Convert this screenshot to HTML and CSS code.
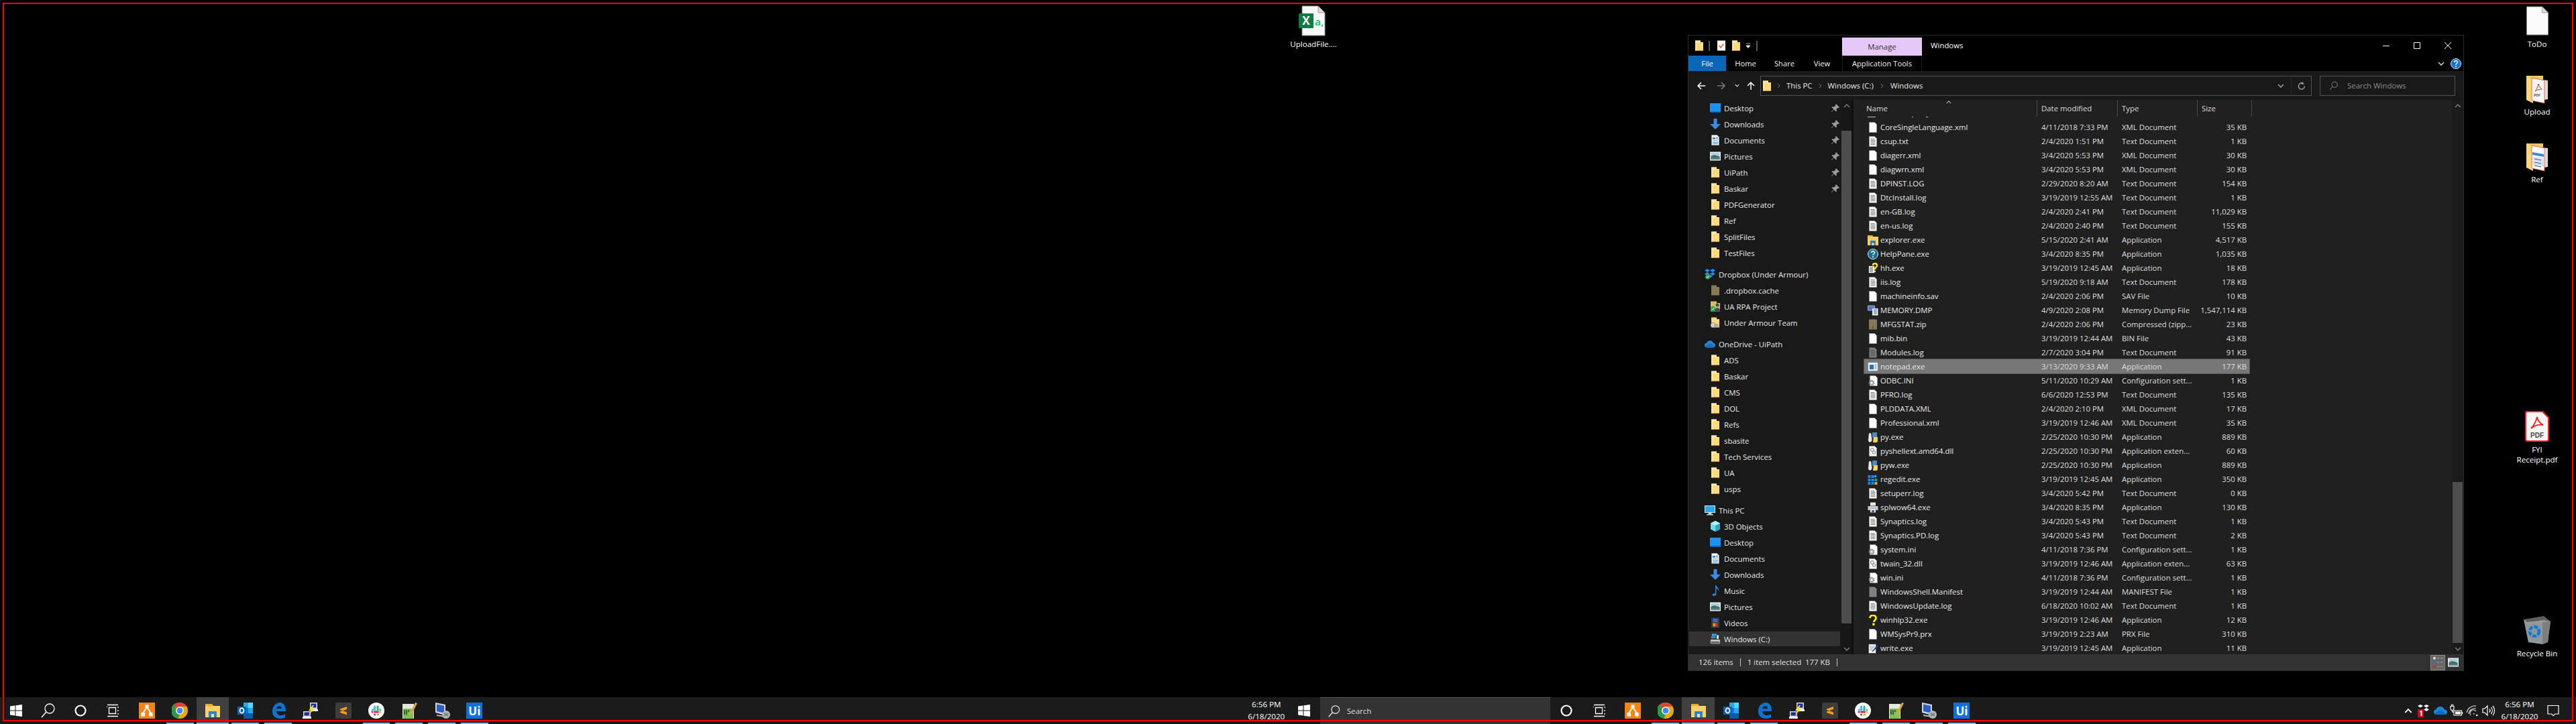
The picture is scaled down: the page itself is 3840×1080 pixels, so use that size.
FILE: index.html
```html
<!DOCTYPE html>
<html lang="en">
<head>
<meta charset="utf-8">
<title>Windows desktop</title>
<link rel="stylesheet" href="styles.css">
</head>
<body>
<svg class="defs" aria-hidden="true">
  <symbol id="folder" viewBox="0 0 16 16"><path d="M2 .5h8v2.500h4v12.500H2z" fill="#fcd97a"/><path d="M2 .5h8v2.500h4v1H4v11.500H2z" fill="#fde7a6"/><path d="M2 15h12v.5H2z" fill="#d9b04e"/></symbol>
  <symbol id="hidden" viewBox="0 0 16 16"><path d="M2 .5h8v2.500h4v12.500H2z" fill="#857a52"/></symbol>
  <symbol id="doc" viewBox="0 0 16 16"><path d="M2.500.5h8l3 3v12h-11z" fill="#fdfdfd" stroke="#9a9a9a" stroke-width=".5"/></symbol>
  <symbol id="txt" viewBox="0 0 16 16"><path d="M2.500.5h8l3 3v12h-11z" fill="#fdfdfd" stroke="#9a9a9a" stroke-width=".5"/><path d="M4.500 4.500h6M4.500 6.500h7M4.500 8.500h7M4.500 10.500h7M4.500 12.500h7" stroke="#666" stroke-width=".9"/></symbol>
  <symbol id="gtxt" viewBox="0 0 16 16"><path d="M2.500.5h8l3 3v12h-11z" fill="#7e7e7e"/><path d="M4.500 4.500h6M4.500 6.500h7M4.500 8.500h7M4.500 10.500h7M4.500 12.500h7" stroke="#4c4c4c" stroke-width=".9"/></symbol>
  <symbol id="gdoc" viewBox="0 0 16 16"><path d="M2.500.5h8l3 3v12h-11z" fill="#808080"/></symbol>
  <symbol id="ini" viewBox="0 0 16 16"><path d="M3.500.5h8l3 3v12h-11z" fill="#fdfdfd" stroke="#9a9a9a" stroke-width=".5"/><circle cx="6" cy="11" r="3.400" fill="none" stroke="#8a8a8a" stroke-width="2" stroke-dasharray="1.600 .7"/><circle cx="6" cy="11" r="2.200" fill="none" stroke="#a8a8a8" stroke-width="1.400"/></symbol>
  <symbol id="dll" viewBox="0 0 16 16"><path d="M2.500.5h8l3 3v12h-11z" fill="#fdfdfd" stroke="#9a9a9a" stroke-width=".5"/><circle cx="7" cy="6" r="2.400" fill="none" stroke="#8b9bb0" stroke-width="1.300"/><circle cx="9.500" cy="10" r="2.100" fill="none" stroke="#9a9a9a" stroke-width="1.300"/></symbol>
  <symbol id="explorer" viewBox="0 0 16 16"><path d="M0 1h7l1 2h8v13H0z" fill="#fbcf5e"/><path d="M0 1h7l1 2H0z" fill="#e9a92d"/><path d="M4 9h8v7H4z" fill="#2d7cc8"/><path d="M6.500 12.500h3V16h-3z" fill="#fbdf90"/></symbol>
  <symbol id="help" viewBox="0 0 16 16"><circle cx="8" cy="8" r="7.500" fill="#14708f" stroke="#d7eef5" stroke-width="1"/><path d="M5.700 6c0-3 4.800-3 4.800-.2 0 2-2.500 1.900-2.500 4" fill="none" stroke="#fff" stroke-width="1.500"/><path d="M7.200 11h1.600v1.700H7.200z" fill="#fff"/></symbol>
  <symbol id="hh" viewBox="0 0 16 16"><path d="M1.500 4.500h9v11h-9z" fill="#fff" stroke="#222" stroke-width=".8"/><path d="M3 7h5M3 9h5M3 11h5M3 13h5" stroke="#555"/><path d="M8 4c0-4 6-4 6 0 0 3-3 2.500-3 6" fill="none" stroke="#f6e31a" stroke-width="2.400"/><path d="M10 11.500h2v2.500h-2z" fill="#f6e31a"/></symbol>
  <symbol id="dmp" viewBox="0 0 16 16"><path d="M.5 1h10v7H.5z" fill="#4a7cd0" stroke="#c7d5ea" stroke-width=".7"/><path d="M7 5h8.500v10.500H7z" fill="#fff" stroke="#777" stroke-width=".5"/><path d="M9 7h5M9 9h5M9 11h5M9 13h5" stroke="#2a64c4"/></symbol>
  <symbol id="zip" viewBox="0 0 16 16"><path d="M2 .5h12v15H2z" fill="#857a52"/><path d="M7 .5h2v15H7z" fill="#5f5f55"/><path d="M7.500 1h1M7.500 3h1M7.500 5h1M7.500 7h1M7.500 9h1" stroke="#ccc"/></symbol>
  <symbol id="npad" viewBox="0 0 16 16"><path d="M1 2h14v12H1z" fill="#f4f7fb" stroke="#bcc8d6" stroke-width=".5"/><path d="M3 5h6v7H3z" fill="#1a74d8"/><path d="M10.500 5h3M10.500 7h3M10.500 9h3M10.500 11h3" stroke="#7b8896"/></symbol>
  <symbol id="py" viewBox="0 0 16 16"><path d="M7 1h7v8H7z" fill="#4b87c4"/><path d="M9 8h6v6c0 1-1 2-2 2H8z" fill="#f5d24f"/><path d="M2 3c1-2 3-1.500 3.500 1l1 8c0 2-1 3.500-3 3.500S1 14 1 12z" fill="#e8edf2" stroke="#7b7b7b" stroke-width=".5"/></symbol>
  <symbol id="reg" viewBox="0 0 16 16"><path d="M.5 2h4v4h-4zM5.500 2h4v4h-4zM.5 7h4v4h-4zM5.500 7h4v4h-4zM10.500 7h4v4h-4zM.5 12h4v4h-4zM5.500 12h4v4h-4z" fill="#0f8fd4"/><path d="M11.500 1l1 1.500 1.500 1-1.500 1-1 1.500-1-1.500-1.500-1 1.500-1z" fill="#1fb7ee"/><path d="M10.500 12h4v4h-4z" fill="#e8a51d"/></symbol>
  <symbol id="print" viewBox="0 0 16 16"><path d="M4 .5h8v5H4z" fill="#e8e8e8"/><path d="M.5 6h15v6H.5z" fill="#c9c9c9"/><path d="M4 10h8v5.500H4z" fill="#fff" stroke="#666" stroke-width=".5"/><path d="M6 12h4v3H6z" fill="#2a64c4"/></symbol>
  <symbol id="whlp" viewBox="0 0 16 16"><path d="M3.500 5c0-5.500 9-5.500 9 0 0 3.600-3.200 3.200-3.200 6" fill="none" stroke="#f8ec10" stroke-width="2.800"/><path d="M7.300 12.500h3.200V16H7.300z" fill="#f8ec10"/></symbol>
  <symbol id="write" viewBox="0 0 16 16"><path d="M1.500 1.500h11v14h-11z" fill="#fff" stroke="#333" stroke-width=".6"/><path d="M2 1v1.500M4 1v1.500M6 1v1.500M8 1v1.500M10 1v1.500M12 1v1.500" stroke="#222"/><path d="M3 5h8M3 7h8M3 9h5M3 11h4" stroke="#999"/><path d="M14.500 3L7 12l-1 2 2-1 8-8z" fill="#223aa8"/><path d="M6 14l1-2 1 1z" fill="#f0d020"/></symbol>
  <symbol id="desktop" viewBox="0 0 16 16"><path d="M0 1h16v14H0z" fill="#1d91f0"/><path d="M0 13.500h16V15H0z" fill="#0a58a8"/></symbol>
  <symbol id="dl" viewBox="0 0 16 16"><path d="M5.500 0h5v8H16l-8 8-8-8h5.500z" fill="#3a8de0"/></symbol>
  <symbol id="docs" viewBox="0 0 16 16"><path d="M2.500.5h8l3 3v12h-11z" fill="#fff" stroke="#9aa" stroke-width=".5"/><path d="M4 4h4v3H4zM4 8.500h8v1H4zM4 11h8v1H4zM4 13h8v1H4z" fill="#3a8de0"/><path d="M9 4h3M9 6h3" stroke="#666"/></symbol>
  <symbol id="pics" viewBox="0 0 16 16"><path d="M0 1.500h16v13H0z" fill="#eee"/><path d="M1.500 3h13v10h-13z" fill="#a9cde6"/><path d="M1.500 8l5-2 8 2.500V13h-13z" fill="#3b7553"/><path d="M1.500 10.500h13V13h-13z" fill="#5f7f92"/></symbol>
  <symbol id="dropbox" viewBox="0 0 16 16"><path d="M4 0l4 2.500L4 5 0 2.500zM12 0l4 2.500L12 5 8 2.500zM4 5l4 2.500L4 10 0 7.500zM12 5l4 2.500L12 10 8 7.500zM8 8.500l4 2.500-4 2.500L4 11z" fill="#2a8cf0"/><circle cx="4.500" cy="12" r="3.500" fill="#2aa748"/><path d="M2.800 12l1.300 1.500 2.400-3" fill="none" stroke="#fff"/></symbol>
  <symbol id="team" viewBox="0 0 16 16"><path d="M1 .5h9v2.500h5v12.500H1z" fill="#d8b968"/><circle cx="11" cy="6" r="2.500" fill="#3b4c66"/><path d="M7 14c0-5 8-5 8 0v1.500H7z" fill="#3b4c66"/><circle cx="4.500" cy="11.500" r="3.700" fill="#2aa748"/><path d="M2.800 11.500l1.300 1.500 2.400-3" fill="none" stroke="#fff"/></symbol>
  <symbol id="shared" viewBox="0 0 16 16"><path d="M2 .5h8v2.500h4v12.500H2z" fill="#fcd97a"/><circle cx="4.500" cy="12" r="3.500" fill="#d0d0d0" stroke="#666" stroke-width=".5"/><circle cx="10" cy="13" r="2.500" fill="#bbb" stroke="#666" stroke-width=".5"/></symbol>
  <symbol id="cloud" viewBox="0 0 16 16"><path d="M4 13.500c-2.500 0-4-1.500-4-3.500 0-1.800 1.300-3 3-3.200C3.700 4.500 5.800 3 8 3c2.400 0 4.200 1.400 4.700 3.500 2 .1 3.300 1.500 3.300 3.400 0 2-1.500 3.600-3.500 3.600z" fill="#2a86d8"/><path d="M6 8c1-.8 2.800-1 4-.2l5.200 3.800c-.5 1.100-1.500 1.900-2.700 1.900H4c-1.300 0-2.500-.5-3.200-1.500z" fill="#1a6fc4"/></symbol>
  <symbol id="pc" viewBox="0 0 16 16"><path d="M0 1h16v11H0z" fill="#d8e4ee"/><path d="M1 2h14v9H1z" fill="#2aa8ee"/><path d="M5.500 12h5v2h-5zM3 14h10v1.500H3z" fill="#c4ccd4"/></symbol>
  <symbol id="cube" viewBox="0 0 16 16"><path d="M8 0l7 3.500v9L8 16l-7-3.500v-9z" fill="#6fdbe8"/><path d="M8 7l7-3.500v9L8 16z" fill="#23a9c4"/><path d="M8 0l7 3.500L8 7 1 3.500z" fill="#b4f0f5"/></symbol>
  <symbol id="music" viewBox="0 0 16 16"><path d="M8 0h1.500c0 3 5 4 3 9-.3-2.500-1.500-4-3-4.500V13c0 2-2.200 3-4 3-2 0-2.500-2-1-3 1-.8 2.500-.8 3.500-.3z" fill="#1a8ce0"/></symbol>
  <symbol id="video" viewBox="0 0 16 16"><path d="M2 .5h12v15H2z" fill="#3c3c3c"/><path d="M4.500 2h7v5h-7z" fill="#3a66d0"/><path d="M4.500 8.500h3.500v5H4.500z" fill="#d9a020"/><path d="M8 8.500h3.500v5H8z" fill="#c03838"/></symbol>
  <symbol id="drive" viewBox="0 0 16 16"><path d="M1 9h14v6H1z" fill="#c8c8c8" stroke="#666" stroke-width=".5"/><path d="M2 12h12v2H2z" fill="#555"/><path d="M2 4h3v3H2zM5.500 4h3v3h-3z" fill="#22a4e8"/><path d="M3 .5h3v3H3zM6.500 .5h3v3h-3z" fill="#4bbcf0"/><path d="M10 3l3-1v6h-3z" fill="#e6e6e6"/></symbol>
  <symbol id="pin" viewBox="0 0 14 14"><path d="M8 1l5 5-1 1-1-.5L8.500 9l.5 2.500-1 1L5 9.500 1.500 13 1 12.500 4.500 9 1.500 6l1-1L5 5.500 7.500 3 7 2z" fill="#9a9a9a"/></symbol>
  <symbol id="up" viewBox="0 0 10 6"><path d="M1 5l4-4 4 4" fill="none" stroke="currentColor" stroke-width="1.600"/></symbol>
  <symbol id="down" viewBox="0 0 10 6"><path d="M1 1l4 4 4-4" fill="none" stroke="currentColor" stroke-width="1.600"/></symbol>
  <symbol id="help2" viewBox="0 0 16 16"><circle cx="8" cy="8" r="7.500" fill="#1573cf" stroke="#dbe9f7" stroke-width="1"/><path d="M5.700 6c0-3 4.800-3 4.800-.2 0 2-2.500 1.900-2.500 4" fill="none" stroke="#fff" stroke-width="1.500"/><path d="M7.200 11h1.600v1.700H7.200z" fill="#fff"/></symbol>
  <symbol id="mag2" viewBox="0 0 24 24"><circle cx="14" cy="9" r="7" fill="none" stroke="#8a8a8a" stroke-width="1.500"/><path d="M9 14l-7 8" stroke="#8a8a8a" stroke-width="1.700"/></symbol>

  <symbol id="win" viewBox="0 0 24 24"><path d="M3 5.500l7.500-1v7H3zM11.500 4.300L21 3v8.500h-9.500zM3 12.500h7.500v7l-7.500-1zM11.500 12.500H21V21l-9.500-1.300z" fill="#fff"/></symbol>
  <symbol id="mag" viewBox="0 0 24 24"><circle cx="14" cy="9" r="7" fill="none" stroke="#fff" stroke-width="1.300"/><path d="M9 14l-7 8" stroke="#fff" stroke-width="1.500"/></symbol>
  <symbol id="ring" viewBox="0 0 24 24"><circle cx="12" cy="12" r="7.500" fill="none" stroke="#fff" stroke-width="2.200"/></symbol>
  <symbol id="tview" viewBox="0 0 24 24"><path d="M6.500 7.500h10v9h-10zM4 3.500h16M4 20.500h16M20 6v2M20 11v2M20 16v2M3 6.500h1" fill="none" stroke="#fff" stroke-width="1.300"/></symbol>
  <symbol id="ui-orange" viewBox="0 0 24 24"><path d="M0 0h24v24H0z" fill="#f68413"/><path d="M9.500 3.500h5v5h-5zM3.500 15h5.500v5.500H3.500zM15 15h5.500v5.500H15z" fill="#fff"/><path d="M11 8.500L6.500 15M13 8.500l4.500 6.500" stroke="#fff" stroke-width="2"/></symbol>
  <symbol id="chrome" viewBox="0 0 24 24"><circle cx="12" cy="12" r="12" fill="#e8a90e"/><path d="M12 0a12 12 0 0 1 10.400 6H12A6 6 0 0 0 6.800 9L3 2.800A12 12 0 0 1 12 0z" fill="#db4437"/><path d="M3 2.800L6.800 9a6 6 0 0 0 5.200 9l-2.800 5.700A12 12 0 0 1 3 2.800z" fill="#2a9a4a"/><circle cx="12" cy="12" r="5.800" fill="#fff"/><circle cx="12" cy="12" r="4.500" fill="#4688f1"/></symbol>
  <symbol id="explorer24" viewBox="0 0 24 24"><path d="M1 2h10l2 3h10v17H1z" fill="#fbd164"/><path d="M1 2h10l2 3H1z" fill="#e9ab33"/><path d="M6 13h12v9H6z" fill="#2d85d0"/><path d="M10 17h4v5h-4z" fill="#fbe09a"/></symbol>
  <symbol id="outlook" viewBox="0 0 24 24"><path d="M9 0h14v24H9z" fill="#0f78d4"/><path d="M9 0h7v8H9zM16 8h7v8h-7z" fill="#28a8ea"/><path d="M16 0h7v8h-7z" fill="#50d9ff"/><path d="M9 16h14v8H9z" fill="#0a5aa8"/><path d="M0 6h13v12H0z" fill="#0a64b8"/><ellipse cx="6.500" cy="12" rx="3" ry="3.600" fill="none" stroke="#fff" stroke-width="1.800"/></symbol>
  <symbol id="edge" viewBox="0 0 24 24"><path d="M3 13C3 5 9 0 14 0c6 0 9 5 9 13H9c0 6 8 8 13 4v5c-7 4-19 2-19-9z" fill="#0c74d0"/><path d="M9 9h8c0-5-7-5-8 0z" fill="#1b1b1b"/></symbol>
  <symbol id="putty" viewBox="0 0 24 24"><path d="M11 0h11v10H11z" fill="#d8d8d8"/><path d="M12.500 1.500h8v6h-8z" fill="#1d2c9c"/><path d="M1 13h11v8H1z" fill="#d8d8d8"/><path d="M2.500 14.500h8v5h-8z" fill="#1d2c9c"/><path d="M0 21h13v3H0zM12 10h11v3H12z" fill="#eee"/><path d="M15 4l-6 8 3 0-3 7 8-9-3 0 3-6z" fill="#f3e21c"/></symbol>
  <symbol id="sublime" viewBox="0 0 24 24"><rect width="24" height="24" rx="2" fill="#3d3d3d"/><path d="M7 9.500L17 6v4L7 13.500zM17 14.500L7 11v4l10 3.500z" fill="#fb9a18"/></symbol>
  <symbol id="slack" viewBox="0 0 24 24"><circle cx="12" cy="12" r="12" fill="#fff"/><path d="M9.500 6v5" stroke="#36c5f0" stroke-width="3" stroke-linecap="round"/><path d="M14 6v5" stroke="#2eb67d" stroke-width="3" stroke-linecap="round"/><path d="M9.500 14h5" stroke="#e01e5a" stroke-width="3" stroke-linecap="round"/><path d="M6 11h1M17 11h1" stroke="#36c5f0" stroke-width="3" stroke-linecap="round"/><path d="M9.500 18h.1M6 14h.1" stroke="#e01e5a" stroke-width="3" stroke-linecap="round"/><path d="M14 18h1M18 14h.1" stroke="#ecb22e" stroke-width="3" stroke-linecap="round"/></symbol>
  <symbol id="npp" viewBox="0 0 24 24"><path d="M2 2h17v22H2z" fill="#e6e6da"/><path d="M3 9h15v15H3z" fill="#7bc052"/><path d="M5 11v7M8 11v7M11 11v3" stroke="#333" stroke-width="1.500"/><path d="M21 0l3 1-9 18-3 2 .5-4z" fill="#d9a63a"/></symbol>
  <symbol id="monitor" viewBox="0 0 24 24"><path d="M2 0l15 3v16L2 15z" fill="#d0d6e0"/><path d="M4 2.500l11 2.200v11L4 13z" fill="#2f5fc4"/><path d="M4 18l13 2v2l-13-2z" fill="#b8b8b8"/><circle cx="18" cy="18" r="6" fill="#b0b0b0"/><path d="M15 20l6-4M15 16l6 4" stroke="#3b8a4a" stroke-width="1.300"/></symbol>

  <symbol id="tdrop" viewBox="0 0 20 20"><path d="M4 1l4 2-4 2.500L0 3zM13 1l4 2-4 2.500L9 3zM13 6l4 2.500L13 11 9 8.500z" fill="#fff"/><path d="M0 8h9v12H0z" fill="#d0021b"/><path d="M3 11l2-1h1.500v8H4.500v-6l-1.500.5z" fill="#fff"/></symbol>
  <symbol id="tcloud" viewBox="0 0 20 20"><path d="M4 16c-2.500 0-4-1.800-4-4 0-2 1.400-3.400 3.400-3.600C4.200 5.800 6.600 4 9.500 4c3 0 5.300 1.800 6 4.300 2.600.1 4.500 1.700 4.500 3.900 0 2.200-1.800 3.800-4.300 3.800z" fill="#1a8ae0"/><path d="M7 10c1.500-1 3.500-1.200 5 0l6.500 5c-.8.700-1.800 1-2.800 1H4c-1.300 0-2.400-.5-3-1.300z" fill="#0f6bc0"/></symbol>
  <symbol id="tbat" viewBox="0 0 20 20"><path d="M6 10h11.500v7H6zM18.500 12v3" fill="none" stroke="#fff" stroke-width="1.200"/><path d="M8 11.500h8v4H8z" fill="#fff"/><path d="M1 3.500h5V7c0 1.500-1 2.500-2.500 2.500S1 8.500 1 7zM2.500 3V.5M4.500 3V.5M3.500 9.500v2.500h2.500" fill="none" stroke="#fff" stroke-width="1.200"/></symbol>
  <symbol id="twifi" viewBox="0 0 20 20"><path d="M1 13a13 13 0 0 1 14-10M4 15a9 9 0 0 1 11-8M7 17a5 5 0 0 1 8-6" fill="none" stroke="#cfcfcf" stroke-width="1.200"/><path d="M11 14h1.500v1.500H11z" fill="#fff"/><path d="M15 16h2.500v2H15z" fill="#fff"/></symbol>
  <symbol id="tvol" viewBox="0 0 20 20"><path d="M1 7h3l4-4v14l-4-4H1z" fill="none" stroke="#fff" stroke-width="1.200"/><path d="M11 7.500a4 4 0 0 1 0 5M13.500 5a8 8 0 0 1 0 10M16 3a11 11 0 0 1 0 14" fill="none" stroke="#fff" stroke-width="1.200"/></symbol>
  <symbol id="tnote" viewBox="0 0 20 20"><path d="M1 2.500h16V15h-5l-3 2.500L6.500 15H1z" fill="none" stroke="#fff" stroke-width="1.200"/></symbol>
</svg>

<main class="desktop">
  <div class="dicon d-excel">
    <svg class="dsvg" viewBox="0 0 48 48"><path d="M7 2h24l10 10v34H7z" fill="#f8f8f8" stroke="#8a8a8a" stroke-width="1"/><path d="M31 2v10h10z" fill="#dcdcdc" stroke="#8a8a8a" stroke-width=".8"/><rect x="2" y="13" width="22" height="22" rx="1" fill="#107c41"/><text x="13" y="30" class="xl-x">X</text><text x="26" y="31" class="xl-a">a,</text></svg>
    <span class="dlabel">UploadFile....</span>
  </div>
  <div class="dicon d-todo">
    <svg class="dsvg" viewBox="0 0 48 48"><path d="M8.500 3h23l9 9v33h-32z" fill="#fbfbfb" stroke="#8f8f8f" stroke-width="1"/><path d="M31.500 3v9h9z" fill="#dddddd" stroke="#8f8f8f" stroke-width=".8"/></svg>
    <span class="dlabel">ToDo</span>
  </div>
  <div class="dicon d-upload">
    <svg class="dsvg" viewBox="0 0 48 48"><path d="M8 5h25v6H8z" fill="#f1c868"/><path d="M8 5l10 5v36L8 41z" fill="#fbd77c"/><path d="M24 10l16 2v28l-6 1z" fill="#dcdcdc"/><path d="M16 8l19 4v34l-19-4z" fill="#f5f5f5" stroke="#e34a3a" stroke-width=".8"/><path d="M26 17c-1 5-3 9-5 11 3-2 7-3 10-3-3-2-4-5-5-8z" fill="none" stroke="#e03020" stroke-width="1"/><text x="19" y="36" class="mini">PDF</text></svg>
    <span class="dlabel">Upload</span>
  </div>
  <div class="dicon d-ref">
    <svg class="dsvg" viewBox="0 0 48 48"><path d="M8 5h25v6H8z" fill="#f1c868"/><path d="M8 5l10 5v36L8 41z" fill="#fbd77c"/><path d="M24 10l16 2v28l-6 1z" fill="#dcdcdc"/><path d="M16 8l19 4v34l-19-4z" fill="#fff" stroke="#e34a3a" stroke-width=".8"/><path d="M17 18l17 3v4l-17-3z" fill="#3d88d8"/><path d="M17 24l17 3v13l-17-3z" fill="#d8e2f5"/><path d="M20 28l10 2M20 33l10 2M20 38l10 2" stroke="#555"/></svg>
    <span class="dlabel">Ref</span>
  </div>
  <div class="dicon d-pdf">
    <svg class="dsvg" viewBox="0 0 48 48"><path d="M8 2h24l9 9v32a3 3 0 0 1-3 3H10a3 3 0 0 1-3-3V4z" fill="#f7f7f7" stroke="#fb1f1f" stroke-width="2"/><path d="M24 10c-2 8-5 13-9 17 6-5 12-6 18-5-5-3-8-6-9-12z" fill="none" stroke="#f0231a" stroke-width="1.800"/><text x="24" y="41" class="pdf">PDF</text></svg>
    <span class="dlabel">FYI Receipt.pdf</span>
  </div>
  <div class="dicon d-bin">
    <svg class="dsvg" viewBox="0 0 48 48"><path d="M4 8l30-5 10 8-3 6-34 0z" fill="#5f5f5f"/><path d="M4 8l5 4 25-3 10 2-4 31-8 3-21-3z" fill="#9a9a9a"/><path d="M6 14l26 0 0 30-21-3z" fill="#8c979e"/><path d="M32 12l11-1-3 31-8 3z" fill="#7e7e7e"/><circle cx="20" cy="26" r="7" fill="none" stroke="#1778d0" stroke-width="4.500" stroke-dasharray="6 2"/></svg>
    <span class="dlabel">Recycle Bin</span>
  </div>

  <section class="window">
    <header class="titlebar">
      <div class="qat">
        <svg class="ic-16 q1"><use href="#folder"/></svg>
        <span class="qsep q2"></span>
        <svg class="ic-16 q3" viewBox="0 0 16 16"><path d="M2 .5h12v15H2z" fill="#fff"/><path d="M4.500 8l2.500 3 4.500-6" fill="none" stroke="#e3622a" stroke-width="1.400"/></svg>
        <svg class="ic-16 q4"><use href="#folder"/></svg>
        <svg class="qdrop" viewBox="0 0 8 8"><path d="M1 1h6M1 4h6L4 7.500z" fill="#fff" stroke="#fff" stroke-width=".7"/></svg>
        <span class="qsep q5"></span>
      </div>
      <div class="manage">Manage</div>
      <div class="wtitle">Windows</div>
      <div class="wbtn"><svg viewBox="0 0 12 12" class="wic"><path d="M1 6.500h10" stroke="#fff"/></svg></div>
      <div class="wbtn"><svg viewBox="0 0 12 12" class="wic"><path d="M1.500 1.500h9v9h-9z" fill="none" stroke="#fff"/></svg></div>
      <div class="wbtn"><svg viewBox="0 0 12 12" class="wic"><path d="M1 1l10 10M11 1L1 11" stroke="#fff"/></svg></div>
    </header>
    <nav class="ribbon">
      <div class="rtab file">File</div>
      <div class="rtab home">Home</div>
      <div class="rtab home">Share</div>
      <div class="rtab viewt">View</div>
      <div class="rtab apptools">Application Tools</div>
      <div class="ribbon-right">
        <svg class="rchev"><use href="#down"/></svg>
        <svg class="rhelp"><use href="#help2"/></svg>
      </div>
    </nav>
    <div class="navrow">
      <div class="nb nb-back"><svg class="arrow" viewBox="0 0 14 14"><path d="M13 7H2M7 2L2 7l5 5" fill="none" stroke="#fff" stroke-width="1.500"/></svg></div>
      <div class="nb nb-fwd"><svg class="arrow" viewBox="0 0 14 14"><path d="M1 7h11M7 2l5 5-5 5" fill="none" stroke="#7a7a7a" stroke-width="1.500"/></svg></div>
      <div class="nb nb-dn"><svg class="chev6"><use href="#down"/></svg></div>
      <div class="nb nb-up"><svg class="arrow" viewBox="0 0 14 14"><path d="M7 13V2M2 7l5-5 5 5" fill="none" stroke="#fff" stroke-width="1.500"/></svg></div>
      <div class="address">
        <svg class="ic-16 addr-folder"><use href="#folder"/></svg>
        <svg class="crumb-sep" viewBox="0 0 23 8"><path d="M10 1l3 3-3 3" fill="none" stroke="#777"/></svg><span>This PC</span>
        <svg class="crumb-sep" viewBox="0 0 23 8"><path d="M10 1l3 3-3 3" fill="none" stroke="#777"/></svg><span>Windows (C:)</span>
        <svg class="crumb-sep sep-last" viewBox="0 0 23 8"><path d="M10 1l3 3-3 3" fill="none" stroke="#777"/></svg><span>Windows</span>
        <div class="addr-right">
          <div class="addr-dd"><svg class="chev8"><use href="#down"/></svg></div>
          <div class="addr-rf"><svg class="rf" viewBox="0 0 14 14"><path d="M11.500 7.500a4.600 4.600 0 1 1-2.300-4M7.500 1v3h3" fill="none" stroke="#9a9a9a" stroke-width="1.500"/></svg></div>
        </div>
      </div>
      <div class="searchbox">
        <svg class="smag"><use href="#mag2"/></svg>
        <span>Search Windows</span>
      </div>
    </div>

    <div class="body">
      <aside class="tree">
        <div class="trow l2"><svg class="ic"><use href="#desktop"/></svg>Desktop<svg class="pin"><use href="#pin"/></svg></div>
        <div class="trow l2"><svg class="ic"><use href="#dl"/></svg>Downloads<svg class="pin"><use href="#pin"/></svg></div>
        <div class="trow l2"><svg class="ic"><use href="#docs"/></svg>Documents<svg class="pin"><use href="#pin"/></svg></div>
        <div class="trow l2"><svg class="ic"><use href="#pics"/></svg>Pictures<svg class="pin"><use href="#pin"/></svg></div>
        <div class="trow l2"><svg class="ic"><use href="#folder"/></svg>UiPath<svg class="pin"><use href="#pin"/></svg></div>
        <div class="trow l2"><svg class="ic"><use href="#folder"/></svg>Baskar<svg class="pin"><use href="#pin"/></svg></div>
        <div class="trow l2"><svg class="ic"><use href="#folder"/></svg>PDFGenerator</div>
        <div class="trow l2"><svg class="ic"><use href="#folder"/></svg>Ref</div>
        <div class="trow l2"><svg class="ic"><use href="#folder"/></svg>SplitFiles</div>
        <div class="trow l2"><svg class="ic"><use href="#folder"/></svg>TestFiles</div>
        <div class="trow l1 gap"><svg class="ic"><use href="#dropbox"/></svg>Dropbox (Under Armour)</div>
        <div class="trow l2"><svg class="ic"><use href="#hidden"/></svg>.dropbox.cache</div>
        <div class="trow l2"><svg class="ic"><use href="#team"/></svg>UA RPA Project</div>
        <div class="trow l2"><svg class="ic"><use href="#shared"/></svg>Under Armour Team</div>
        <div class="trow l1 gap"><svg class="ic"><use href="#cloud"/></svg>OneDrive - UiPath</div>
        <div class="trow l2"><svg class="ic"><use href="#folder"/></svg>ADS</div>
        <div class="trow l2"><svg class="ic"><use href="#folder"/></svg>Baskar</div>
        <div class="trow l2"><svg class="ic"><use href="#folder"/></svg>CMS</div>
        <div class="trow l2"><svg class="ic"><use href="#folder"/></svg>DOL</div>
        <div class="trow l2"><svg class="ic"><use href="#folder"/></svg>Refs</div>
        <div class="trow l2"><svg class="ic"><use href="#folder"/></svg>sbasite</div>
        <div class="trow l2"><svg class="ic"><use href="#folder"/></svg>Tech Services</div>
        <div class="trow l2"><svg class="ic"><use href="#folder"/></svg>UA</div>
        <div class="trow l2"><svg class="ic"><use href="#folder"/></svg>usps</div>
        <div class="trow l1 gap"><svg class="ic"><use href="#pc"/></svg>This PC</div>
        <div class="trow l2"><svg class="ic"><use href="#cube"/></svg>3D Objects</div>
        <div class="trow l2"><svg class="ic"><use href="#desktop"/></svg>Desktop</div>
        <div class="trow l2"><svg class="ic"><use href="#docs"/></svg>Documents</div>
        <div class="trow l2"><svg class="ic"><use href="#dl"/></svg>Downloads</div>
        <div class="trow l2"><svg class="ic"><use href="#music"/></svg>Music</div>
        <div class="trow l2"><svg class="ic"><use href="#pics"/></svg>Pictures</div>
        <div class="trow l2"><svg class="ic"><use href="#video"/></svg>Videos</div>
        <div class="trow l2 sel"><svg class="ic"><use href="#drive"/></svg>Windows (C:)</div>
      </aside>
      <div class="sb sb-tree">
        <div class="sb-end"><svg class="sb-arrow"><use href="#up"/></svg></div>
        <div class="thumb"></div>
        <div class="sb-end sb-end-b"><svg class="sb-arrow"><use href="#down"/></svg></div>
      </div>
      <div class="split"></div>
      <div class="files">
        <div class="fhead">
          <div class="fh">Name<svg class="sort"><use href="#up"/></svg></div>
          <div class="fh">Date modified</div>
          <div class="fh">Type</div>
          <div class="fh">Size</div>
        </div>
        <div class="flist">
          <div class="peek"><span class="pk-a"></span><span class="pk-b"></span><span class="pk-c"></span></div>
          <div class="rows">
            <div class="row"><span class="nm"><svg class="ic"><use href="#doc"/></svg>CoreSingleLanguage.xml</span><span>4/11/2018 7:33 PM</span><span>XML Document</span><span class="sz">35 KB</span></div>
            <div class="row"><span class="nm"><svg class="ic"><use href="#txt"/></svg>csup.txt</span><span>2/4/2020 1:51 PM</span><span>Text Document</span><span class="sz">1 KB</span></div>
            <div class="row"><span class="nm"><svg class="ic"><use href="#doc"/></svg>diagerr.xml</span><span>3/4/2020 5:53 PM</span><span>XML Document</span><span class="sz">30 KB</span></div>
            <div class="row"><span class="nm"><svg class="ic"><use href="#doc"/></svg>diagwrn.xml</span><span>3/4/2020 5:53 PM</span><span>XML Document</span><span class="sz">30 KB</span></div>
            <div class="row"><span class="nm"><svg class="ic"><use href="#txt"/></svg>DPINST.LOG</span><span>2/29/2020 8:20 AM</span><span>Text Document</span><span class="sz">154 KB</span></div>
            <div class="row"><span class="nm"><svg class="ic"><use href="#txt"/></svg>DtcInstall.log</span><span>3/19/2019 12:55 AM</span><span>Text Document</span><span class="sz">1 KB</span></div>
            <div class="row"><span class="nm"><svg class="ic"><use href="#txt"/></svg>en-GB.log</span><span>2/4/2020 2:41 PM</span><span>Text Document</span><span class="sz">11,029 KB</span></div>
            <div class="row"><span class="nm"><svg class="ic"><use href="#txt"/></svg>en-us.log</span><span>2/4/2020 2:40 PM</span><span>Text Document</span><span class="sz">155 KB</span></div>
            <div class="row"><span class="nm"><svg class="ic"><use href="#explorer"/></svg>explorer.exe</span><span>5/15/2020 2:41 AM</span><span>Application</span><span class="sz">4,517 KB</span></div>
            <div class="row"><span class="nm"><svg class="ic"><use href="#help"/></svg>HelpPane.exe</span><span>3/4/2020 8:35 PM</span><span>Application</span><span class="sz">1,035 KB</span></div>
            <div class="row"><span class="nm"><svg class="ic"><use href="#hh"/></svg>hh.exe</span><span>3/19/2019 12:45 AM</span><span>Application</span><span class="sz">18 KB</span></div>
            <div class="row"><span class="nm"><svg class="ic"><use href="#txt"/></svg>iis.log</span><span>5/19/2020 9:18 AM</span><span>Text Document</span><span class="sz">178 KB</span></div>
            <div class="row"><span class="nm"><svg class="ic"><use href="#doc"/></svg>machineinfo.sav</span><span>2/4/2020 2:06 PM</span><span>SAV File</span><span class="sz">10 KB</span></div>
            <div class="row"><span class="nm"><svg class="ic"><use href="#dmp"/></svg>MEMORY.DMP</span><span>4/9/2020 2:08 PM</span><span>Memory Dump File</span><span class="sz">1,547,114 KB</span></div>
            <div class="row"><span class="nm"><svg class="ic"><use href="#zip"/></svg>MFGSTAT.zip</span><span>2/4/2020 2:06 PM</span><span>Compressed (zipp...</span><span class="sz">23 KB</span></div>
            <div class="row"><span class="nm"><svg class="ic"><use href="#doc"/></svg>mib.bin</span><span>3/19/2019 12:44 AM</span><span>BIN File</span><span class="sz">43 KB</span></div>
            <div class="row"><span class="nm"><svg class="ic"><use href="#gtxt"/></svg>Modules.log</span><span>2/7/2020 3:04 PM</span><span>Text Document</span><span class="sz">91 KB</span></div>
            <div class="row on"><span class="nm"><svg class="ic"><use href="#npad"/></svg>notepad.exe</span><span>3/13/2020 9:33 AM</span><span>Application</span><span class="sz">177 KB</span></div>
            <div class="row"><span class="nm"><svg class="ic"><use href="#ini"/></svg>ODBC.INI</span><span>5/11/2020 10:29 AM</span><span>Configuration sett...</span><span class="sz">1 KB</span></div>
            <div class="row"><span class="nm"><svg class="ic"><use href="#txt"/></svg>PFRO.log</span><span>6/6/2020 12:53 PM</span><span>Text Document</span><span class="sz">135 KB</span></div>
            <div class="row"><span class="nm"><svg class="ic"><use href="#doc"/></svg>PLDDATA.XML</span><span>2/4/2020 2:10 PM</span><span>XML Document</span><span class="sz">17 KB</span></div>
            <div class="row"><span class="nm"><svg class="ic"><use href="#doc"/></svg>Professional.xml</span><span>3/19/2019 12:46 AM</span><span>XML Document</span><span class="sz">35 KB</span></div>
            <div class="row"><span class="nm"><svg class="ic"><use href="#py"/></svg>py.exe</span><span>2/25/2020 10:30 PM</span><span>Application</span><span class="sz">889 KB</span></div>
            <div class="row"><span class="nm"><svg class="ic"><use href="#dll"/></svg>pyshellext.amd64.dll</span><span>2/25/2020 10:30 PM</span><span>Application exten...</span><span class="sz">60 KB</span></div>
            <div class="row"><span class="nm"><svg class="ic"><use href="#py"/></svg>pyw.exe</span><span>2/25/2020 10:30 PM</span><span>Application</span><span class="sz">889 KB</span></div>
            <div class="row"><span class="nm"><svg class="ic"><use href="#reg"/></svg>regedit.exe</span><span>3/19/2019 12:45 AM</span><span>Application</span><span class="sz">350 KB</span></div>
            <div class="row"><span class="nm"><svg class="ic"><use href="#txt"/></svg>setuperr.log</span><span>3/4/2020 5:42 PM</span><span>Text Document</span><span class="sz">0 KB</span></div>
            <div class="row"><span class="nm"><svg class="ic"><use href="#print"/></svg>splwow64.exe</span><span>3/4/2020 8:35 PM</span><span>Application</span><span class="sz">130 KB</span></div>
            <div class="row"><span class="nm"><svg class="ic"><use href="#txt"/></svg>Synaptics.log</span><span>3/4/2020 5:43 PM</span><span>Text Document</span><span class="sz">1 KB</span></div>
            <div class="row"><span class="nm"><svg class="ic"><use href="#txt"/></svg>Synaptics.PD.log</span><span>3/4/2020 5:43 PM</span><span>Text Document</span><span class="sz">2 KB</span></div>
            <div class="row"><span class="nm"><svg class="ic"><use href="#ini"/></svg>system.ini</span><span>4/11/2018 7:36 PM</span><span>Configuration sett...</span><span class="sz">1 KB</span></div>
            <div class="row"><span class="nm"><svg class="ic"><use href="#dll"/></svg>twain_32.dll</span><span>3/19/2019 12:46 AM</span><span>Application exten...</span><span class="sz">63 KB</span></div>
            <div class="row"><span class="nm"><svg class="ic"><use href="#ini"/></svg>win.ini</span><span>4/11/2018 7:36 PM</span><span>Configuration sett...</span><span class="sz">1 KB</span></div>
            <div class="row"><span class="nm"><svg class="ic"><use href="#gdoc"/></svg>WindowsShell.Manifest</span><span>3/19/2019 12:44 AM</span><span>MANIFEST File</span><span class="sz">1 KB</span></div>
            <div class="row"><span class="nm"><svg class="ic"><use href="#txt"/></svg>WindowsUpdate.log</span><span>6/18/2020 10:02 AM</span><span>Text Document</span><span class="sz">1 KB</span></div>
            <div class="row"><span class="nm"><svg class="ic"><use href="#whlp"/></svg>winhlp32.exe</span><span>3/19/2019 12:46 AM</span><span>Application</span><span class="sz">12 KB</span></div>
            <div class="row"><span class="nm"><svg class="ic"><use href="#doc"/></svg>WMSysPr9.prx</span><span>3/19/2019 2:23 AM</span><span>PRX File</span><span class="sz">310 KB</span></div>
            <div class="row"><span class="nm"><svg class="ic"><use href="#write"/></svg>write.exe</span><span>3/19/2019 12:45 AM</span><span>Application</span><span class="sz">11 KB</span></div>
          </div>
        </div>
      </div>
      <div class="sb sb-list">
        <div class="sb-end"><svg class="sb-arrow"><use href="#up"/></svg></div>
        <div class="thumb"></div>
        <div class="sb-end sb-end-b"><svg class="sb-arrow"><use href="#down"/></svg></div>
      </div>
    </div>

    <footer class="status">
      <span class="st-a">126 items</span>
      <span class="st-b">1 item selected&nbsp; 177 KB</span>
      <div class="view-details" aria-hidden="true">
        <svg class="vd" viewBox="0 0 16 16"><path d="M2 1h3v3H2z" fill="#e8e8e8"/><path d="M2 6.500h3v3H2z" fill="#3a6fd0"/><path d="M2 12h3v3H2z" fill="#d02a2a"/><path d="M7 2.500h3M11.500 2.500h3M7 8h3M11.500 8h3M7 13.500h3M11.500 13.500h3" stroke="#9a9a9a"/></svg>
      </div>
      <svg class="view-thumb"><use href="#pics"/></svg>
    </footer>
  </section>
</main>

<footer class="taskbar">
  <div class="tb sys"><svg class="tbi"><use href="#win"/></svg></div>
  <div class="tb sys"><svg class="tbi"><use href="#mag"/></svg></div>
  <div class="tb sys"><svg class="tbi"><use href="#ring"/></svg></div>
  <div class="tb sys"><svg class="tbi"><use href="#tview"/></svg></div>
  <div class="apps">
    <div class="tb"><svg class="tbi"><use href="#ui-orange"/></svg></div>
    <div class="tb on"><svg class="tbi"><use href="#chrome"/></svg></div>
    <div class="tb on act"><svg class="tbi"><use href="#explorer24"/></svg></div>
    <div class="tb on"><svg class="tbi"><use href="#outlook"/></svg></div>
    <div class="tb on"><svg class="tbi"><use href="#edge"/></svg></div>
    <div class="tb"><svg class="tbi"><use href="#putty"/></svg></div>
    <div class="tb"><svg class="tbi"><use href="#sublime"/></svg></div>
    <div class="tb on"><svg class="tbi"><use href="#slack"/></svg></div>
    <div class="tb on"><svg class="tbi"><use href="#npp"/></svg></div>
    <div class="tb on"><svg class="tbi"><use href="#monitor"/></svg></div>
    <div class="tb on"><div class="ui-logo">Ui</div></div>
  </div>
  <div class="clock clock-a"><span>6:56 PM</span><span>6/18/2020</span></div>
  <div class="tb sys"><svg class="tbi"><use href="#win"/></svg></div>
  <div class="tsearch"><svg class="tbi-s"><use href="#mag"/></svg><span>Search</span></div>
  <div class="apps-b">
    <div class="tb"><svg class="tbi"><use href="#ring"/></svg></div>
    <div class="tb"><svg class="tbi"><use href="#tview"/></svg></div>
    <div class="tb"><svg class="tbi"><use href="#ui-orange"/></svg></div>
    <div class="tb on"><svg class="tbi"><use href="#chrome"/></svg></div>
    <div class="tb on act"><svg class="tbi"><use href="#explorer24"/></svg></div>
    <div class="tb on"><svg class="tbi"><use href="#outlook"/></svg></div>
    <div class="tb on"><svg class="tbi"><use href="#edge"/></svg></div>
    <div class="tb"><svg class="tbi"><use href="#putty"/></svg></div>
    <div class="tb"><svg class="tbi"><use href="#sublime"/></svg></div>
    <div class="tb on"><svg class="tbi"><use href="#slack"/></svg></div>
    <div class="tb on"><svg class="tbi"><use href="#npp"/></svg></div>
    <div class="tb on"><svg class="tbi"><use href="#monitor"/></svg></div>
    <div class="tb on"><div class="ui-logo">Ui</div></div>
  </div>
  <div class="tray">
    <div class="ti"><svg class="chevt"><use href="#up"/></svg></div>
    <div class="ti"><svg class="tic"><use href="#tdrop"/></svg></div>
    <div class="ti"><svg class="tic"><use href="#tcloud"/></svg></div>
    <div class="ti"><svg class="tic"><use href="#tbat"/></svg></div>
    <div class="ti"><svg class="tic"><use href="#twifi"/></svg></div>
    <div class="ti"><svg class="tic"><use href="#tvol"/></svg></div>
    <div class="clock clock-b"><span>6:56 PM</span><span>6/18/2020</span></div>
    <div class="notif"><svg class="tic"><use href="#tnote"/></svg></div>
  </div>
</footer>
<div class="redframe"></div>
</body>
</html>
```

FILE: styles.css
```css
* { box-sizing: border-box; }
html, body { margin: 0; height: 100%; }
body {
  width: 3840px;
  height: 1080px;
  overflow: hidden;
  background: #000;
  color: #e8e8e8;
  font-family: "Open Sans", "Noto Sans", "Liberation Sans", sans-serif;
  font-size: 11.4px;
  display: flex;
  flex-direction: column;
  position: relative;
}
.defs { position: absolute; width: 0; height: 0; }
.desktop { flex: 1; position: relative; }
.redframe { position: absolute; left: 4px; top: 4px; width: 3832px; height: 1072px; border: 2px solid #f00; pointer-events: none; }

/* desktop icons */
.dicon { position: absolute; width: 74px; display: flex; flex-direction: column; align-items: center; }
.dsvg { width: 48px; height: 48px; flex: none; }
.dlabel { margin-top: 3px; color: #fff; text-align: center; line-height: 15px; font-size: 11.6px; }
.d-excel { left: 1921px; top: 7px; }
.d-todo { left: 3745px; top: 7px; }
.d-upload { left: 3745px; top: 108px; }
.d-ref { left: 3745px; top: 209px; }
.d-pdf { left: 3745px; top: 612px; }
.d-bin { left: 3745px; top: 916px; }
.xl-x { font: 700 17px "Open Sans", sans-serif; fill: #fff; text-anchor: middle; }
.xl-a { font: 700 15px "Open Sans", sans-serif; fill: #33c481; }
.mini { font: 700 5px "Liberation Sans", sans-serif; fill: #555; }
.pdf { font: 700 10px "Liberation Sans", sans-serif; fill: #444; text-anchor: middle; }

/* window */
.window { position: absolute; left: 2516px; top: 52px; width: 1157px; height: 949px; border: 1px solid #2c2c2c; background: #191919; display: flex; flex-direction: column; }
.titlebar { height: 30px; flex: none; background: #000; display: flex; }
.qat { width: 229px; flex: none; display: flex; align-items: center; padding-left: 8px; }
.ic-16 { width: 16px; height: 16px; flex: none; }
.qsep { width: 2px; height: 15px; background: #5a5a5a; }
.q2 { margin-left: 6px; }
.q3 { margin-left: 9px; }
.q4 { margin-left: 6px; }
.qdrop { width: 8px; height: 8px; margin-left: 6px; }
.q5 { margin-left: 8px; }
.manage { width: 119px; margin-top: 3px; background: #e6c8f8; color: #333; display: flex; align-items: center; justify-content: center; }
.wtitle { flex: 1; margin-left: 13px; color: #fff; line-height: 30px; }
.wbtn { width: 46px; display: flex; align-items: center; justify-content: center; }
.wic { width: 12px; height: 12px; }

.ribbon { height: 23px; flex: none; background: #000; display: flex; align-items: stretch; }
.rtab { display: flex; align-items: center; justify-content: center; color: #f2f2f2; font-size: 11.2px; }
.file { width: 56px; background: #0a66b7; color: #fff; }
.home { width: 58px; }
.viewt { width: 54px; }
.apptools { width: 119px; margin-left: 3px; border-left: 1px solid #222; border-right: 1px solid #222; }
.ribbon-right { margin-left: auto; display: flex; align-items: center; gap: 6px; padding-right: 3px; }
.rchev { width: 10px; height: 6px; color: #ccc; margin-right: 3px; }
.rhelp { width: 16px; height: 16px; }

.navrow { height: 43px; flex: none; display: flex; align-items: center; padding-right: 12px; background: #191919; }
.nb { display: flex; align-items: center; justify-content: center; flex: none; }
.nb-back { width: 38px; }
.nb-fwd { width: 22px; }
.nb-dn { width: 24px; }
.nb-up { width: 18px; margin-right: 5px; }
.arrow { width: 14px; height: 14px; }
.chev6 { width: 7px; height: 5px; color: #ddd; }
.address { flex: 1; height: 30px; border: 1px solid #525252; background: #191919; display: flex; align-items: center; padding-left: 1px; }
.addr-folder { margin-right: -2px; }
.crumb-sep { width: 23px; height: 8px; flex: none; }
.sep-last { width: 25px; }
.addr-right { margin-left: auto; height: 100%; display: flex; }
.addr-dd, .addr-rf { width: 30px; display: flex; align-items: center; justify-content: center; }
.addr-rf { border-left: 1px solid #262626; }
.chev8 { width: 10px; height: 6px; color: #999; }
.rf { width: 14px; height: 14px; }
.searchbox { width: 202px; height: 30px; margin-left: 12px; border: 1px solid #525252; display: flex; align-items: center; padding-left: 13px; gap: 13px; color: #8c8c8c; }
.smag { width: 14px; height: 14px; }

.body { flex: 1; display: flex; min-height: 0; }
.tree { width: 228px; flex: none; background: #191919; }
.trow { height: 24px; display: flex; align-items: center; gap: 5px; padding-right: 2px; }
.l2 { padding-left: 32px; }
.l1 { padding-left: 24px; }
.gap { margin-top: 8px; }
.ic { width: 16px; height: 16px; flex: none; }
.pin { width: 14px; height: 14px; margin-left: auto; }
.sel { height: 22px; margin: 1px 2px 1px 1px; padding-left: 31px; background: #333; }

.sb { flex: none; display: grid; background: #171717; color: #777; }
.sb-tree { width: 15px; grid-template-rows: 46px 1fr 46px; }
.sb-list { width: 17px; grid-template-rows: 570px 1fr 17px; background: #1b1b1b; padding: 0 1px; }
.thumb { background: #4d4d4d; }
.sb-end { height: 17px; display: flex; align-items: center; justify-content: center; }
.sb-end-b { align-self: end; }
.sb-arrow { width: 10px; height: 6px; }
.split { width: 3px; flex: none; background: #101010; }

.files { flex: 1; min-width: 0; background: #202020; display: flex; flex-direction: column; }
.fhead { height: 25px; flex: none; padding-left: 16px; display: grid; grid-template-columns: 258px 120px 119px 81px; }
.fh { border-right: 1px solid #4a4a4a; padding-left: 6px; display: flex; align-items: center; position: relative; color: #dcdcdc; }
.fh:first-child { padding-left: 3px; }
.sort { position: absolute; left: 122px; top: 1px; width: 8px; height: 5px; color: #aaa; }
.flist { flex: 1; min-height: 0; overflow: hidden; }
.peek { height: 5px; padding-left: 21px; display: flex; align-items: flex-start; }
.peek span { height: 1px; background: #bbb; }
.pk-a { width: 12px; }
.pk-b { width: 2px; margin-left: 54px; }
.pk-c { width: 3px; margin-left: 19px; }
.rows { padding-left: 16px; }
.row { width: 574px; height: 21px; display: grid; grid-template-columns: 258px 120px 119px 77px; align-items: center; color: #dedede; }
.row > span { padding-left: 6px; white-space: nowrap; }
.row > .nm { padding-left: 5px; display: flex; align-items: center; gap: 3px; color: #e8e8e8; }
.row > .sz { padding: 0 4px 0 0; text-align: right; }
.row.on { background: #777; box-shadow: 0 0 0 1px #555; position: relative; }

.status { height: 24px; flex: none; background: #323232; display: flex; align-items: center; padding-left: 15px; color: #e0e0e0; }
.st-a { padding-right: 10px; border-right: 1px solid #ccc; line-height: 12px; }
.st-b { padding: 0 10px; border-right: 1px solid #ccc; line-height: 12px; }
.view-details { margin-left: auto; width: 22px; height: 23px; background: #666; border: 1px solid #8a8a8a; display: flex; align-items: center; justify-content: center; }
.vd { width: 18px; height: 18px; }
.view-thumb { width: 16px; height: 16px; margin: 0 7px 0 4px; }

/* taskbar */
.taskbar { height: 40px; flex: none; background: #1b1b1b; display: flex; align-items: stretch; position: relative; }
.tb { width: 48.8px; flex: none; display: flex; align-items: center; justify-content: center; position: relative; }
.tb.sys { width: 48px; }
.apps { display: flex; margin-left: 3px; margin-right: 1124px; }
.apps-b { display: flex; flex: 1; }
.apps-b .tb { width: 49.1px; }
.tbi { width: 24px; height: 24px; }
.tb.on::after { content: ""; position: absolute; left: 4px; right: 4px; bottom: 0; height: 2px; background: #76b9ed; }
.tb.act { background: #404040; }
.tb.act::after { left: 0; right: 0; }
.ui-logo { width: 24px; height: 24px; background: #0f6fdc; color: #fff; display: flex; align-items: center; justify-content: center; font: 700 17px "Open Sans", sans-serif; }
.clock { display: flex; flex-direction: column; align-items: center; justify-content: center; line-height: 18px; color: #fff; font-size: 11.6px; flex: none; }
.clock-a { width: 64px; }
.clock-b { width: 68px; }
.tsearch { width: 343px; flex: none; background: #333; border-top: 1px solid #555; display: flex; align-items: center; gap: 7px; padding-left: 9px; color: #ddd; font-size: 11.6px; }
.tbi-s { width: 24px; height: 20px; }
.tray { display: flex; padding-right: 16px; }
.ti { width: 24px; display: flex; align-items: center; justify-content: center; }
.chevt { width: 12px; height: 7px; color: #fff; }
.tic { width: 20px; height: 20px; }
.notif { width: 34px; display: flex; align-items: center; justify-content: center; }
```
